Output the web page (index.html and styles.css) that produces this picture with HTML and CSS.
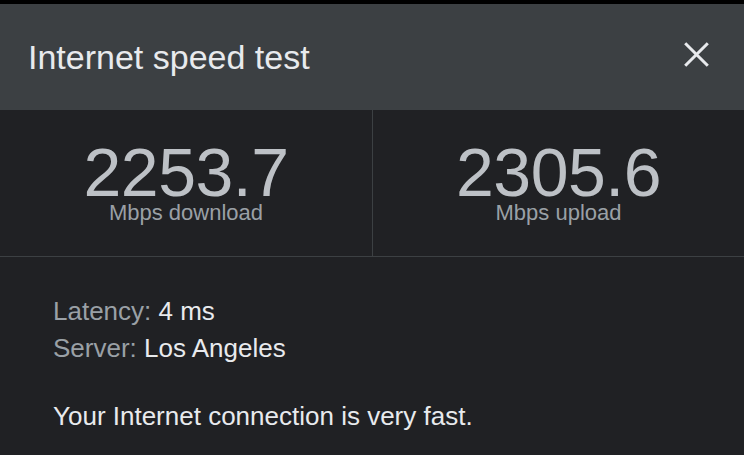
FILE: index.html
```html
<!DOCTYPE html>
<html lang="en">
<head>
<meta charset="utf-8">
<title>Internet speed test</title>
<link rel="stylesheet" href="styles.css">
</head>
<body>
<div class="topbar"></div>
<div class="dialog">
  <header class="header">
    <h1 class="title">Internet speed test</h1>
    <button class="close" aria-label="Close">
      <svg width="25" height="25" viewBox="0 0 25 25"><path d="M1.2 1.2L23.8 23.8M23.8 1.2L1.2 23.8" stroke="#e8eaed" stroke-width="3" fill="none"/></svg>
    </button>
  </header>
  <section class="stats">
    <div class="stat">
      <div class="num">2253.7</div>
      <div class="unit">Mbps download</div>
    </div>
    <div class="stat stat-right">
      <div class="num">2305.6</div>
      <div class="unit">Mbps upload</div>
    </div>
  </section>
  <section class="details">
    <div class="row"><span class="key">Latency:</span> <span class="val">4 ms</span></div>
    <div class="row"><span class="key">Server:</span> <span class="val">Los Angeles</span></div>
    <p class="summary">Your Internet connection is very fast.</p>
  </section>
</div>
</body>
</html>
```
FILE: styles.css
```css
html, body {
  margin: 0;
  padding: 0;
  background: #202124;
  font-family: "Liberation Sans", Arial, sans-serif;
}
.topbar {
  height: 4px;
  background: #000;
}
.dialog {
  background: #202124;
}
.header {
  height: 106px;
  background: #3c4043;
  display: flex;
  align-items: center;
  justify-content: space-between;
  padding: 0 35px 0 28px;
}
.title {
  margin: 0;
  font-weight: normal;
  font-size: 34px;
  line-height: 34px;
  color: #e8eaed;
}
.close {
  background: none;
  border: 0;
  padding: 0;
  width: 25px;
  height: 25px;
  margin-bottom: 6px;
  display: block;
}
.close svg { display: block; }
.stats {
  display: grid;
  grid-template-columns: 372px 1fr;
  height: 146px;
  border-bottom: 1px solid #3c4043;
}
.stat {
  text-align: center;
  padding-top: 33px;
}
.stat-right {
  border-left: 1px solid #3c4043;
}
.num {
  font-size: 68px;
  line-height: 58px;
  color: #bdc1c6;
  letter-spacing: -0.5px;
}
.unit {
  margin-top: 1px;
  font-size: 22px;
  line-height: 22px;
  color: #9aa0a6;
}
.details {
  padding: 36px 0 0 53px;
}
.row {
  font-size: 26px;
  line-height: 37px;
}
.key { color: #9aa0a6; }
.val { color: #e8eaed; }
.summary {
  margin: 31px 0 0;
  font-size: 26px;
  line-height: 37px;
  color: #e8eaed;
}
```
